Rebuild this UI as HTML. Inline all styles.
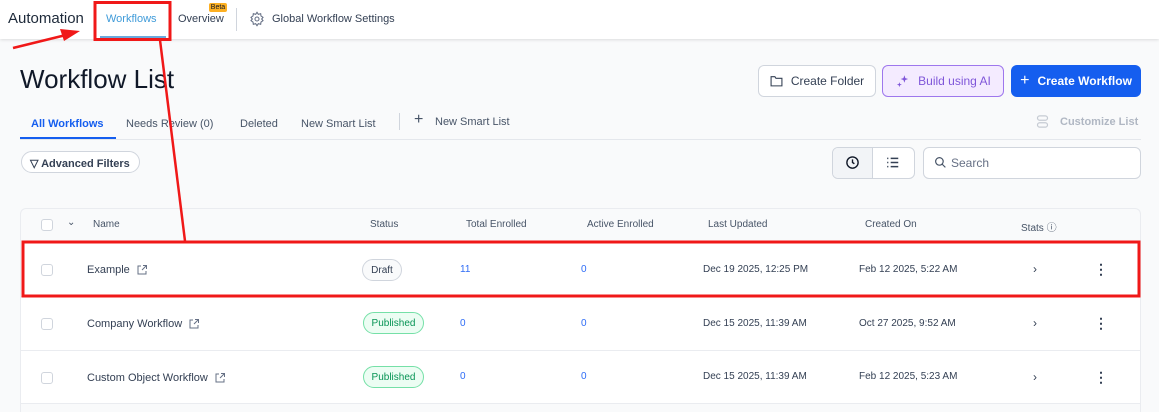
<!DOCTYPE html>
<html><head><style>
*{box-sizing:border-box;margin:0;padding:0}
html,body{width:1159px;height:412px;overflow:hidden}
body{background:#f9fafb;font-family:"Liberation Sans",sans-serif;position:relative;color:#101828}
.a{position:absolute;white-space:nowrap}
.top{position:absolute;left:0;top:0;width:1159px;height:39px;background:#fff;box-shadow:0 1px 3px rgba(0,0,0,.12)}
.btn{position:absolute;height:32px;border-radius:6px;font-size:12px;display:flex;align-items:center;justify-content:center;gap:8px}
.cb{position:absolute;width:12px;height:12px;border:1px solid #d0d5dd;border-radius:3px;background:#fff}
.h{font-size:10px;color:#475467}
.row{position:absolute;left:21px;width:1119px;background:#fff;border-bottom:1px solid #eaecf0}
.pill{position:absolute;height:22px;border-radius:11px;font-size:10px;display:flex;align-items:center;justify-content:center}
.pub{border:1px solid #75e0a7;background:#ecfdf3;color:#079455;width:61px}
.n{font-size:10px;color:#2e6cf6}
.d{font-size:10px;color:#344054}
.nm{font-size:11px;color:#344054;display:flex;align-items:center;gap:6px}
</style></head><body>
<div class="top"></div>
<div class="a" style="left:8px;top:10px;font-size:15px;color:#1d2939">Automation</div>
<div class="a" style="left:106px;top:13px;font-size:11px;color:#3f9bd9">Workflows</div>
<div class="a" style="left:100px;top:36px;width:66px;height:2px;background:#6aa9dd"></div>
<div class="a" style="left:178px;top:13px;font-size:11px;color:#344054">Overview</div>
<div class="a" style="left:209px;top:3px;width:18px;height:9px;background:#fdb022;border-radius:2px;font-size:7px;text-align:center;line-height:9px">Beta</div>
<div class="a" style="left:236px;top:8px;width:1px;height:23px;background:#d0d5dd"></div>
<svg class="a" style="left:249px;top:11px" width="16" height="16" viewBox="0 0 24 24" fill="none" stroke="#667085" stroke-width="1.6"><circle cx="12" cy="12" r="3"/><path d="M12 2l2 3 3.5-1 .5 3.5 3 2-2 2.5 2 2.5-3 2-.5 3.5-3.5-1-2 3-2-3-3.5 1-.5-3.5-3-2 2-2.5-2-2.5 3-2 .5-3.5 3.5 1z"/></svg>
<div class="a" style="left:272px;top:13px;font-size:11px;color:#344054">Global Workflow Settings</div>

<div class="a" style="left:20px;top:64px;font-size:26px;color:#101828">Workflow List</div>
<div class="btn" style="left:758px;top:65px;width:118px;background:#fff;border:1px solid #d0d5dd;color:#344054"><svg width="13" height="12" viewBox="0 0 24 22" fill="none" stroke="#344054" stroke-width="2"><path d="M2 3h7l2 3h11v14H2z"/></svg>Create Folder</div>
<div class="btn" style="left:882px;top:65px;width:122px;background:#f4ebff;border:1px solid #9e77ed;color:#7f56d9"><svg width="15" height="15" viewBox="0 0 24 24" fill="#7f56d9"><path d="M15 2l1.5 4.5L21 8l-4.5 1.5L15 14l-1.5-4.5L9 8l4.5-1.5z"/><path d="M7 13l1 3 3 1-3 1-1 3-1-3-3-1 3-1z"/></svg>Build using AI</div>
<div class="btn" style="left:1011px;top:65px;width:130px;background:#155eef;color:#fff;font-weight:bold"><span style="font-size:16px;font-weight:normal">+</span>Create Workflow</div>

<div class="a" style="left:31px;top:118px;font-size:11px;color:#155eef;font-weight:bold">All Workflows</div>
<div class="a" style="left:20px;top:137px;width:96px;height:2px;background:#155eef"></div>
<div class="a" style="left:126px;top:118px;font-size:11px;color:#475467">Needs Review (0)</div>
<div class="a" style="left:240px;top:118px;font-size:11px;color:#475467">Deleted</div>
<div class="a" style="left:301px;top:118px;font-size:11px;color:#475467">New Smart List</div>
<div class="a" style="left:399px;top:113px;width:1px;height:17px;background:#d0d5dd"></div>
<div class="a" style="left:414px;top:111px;font-size:16px;color:#475467">+</div>
<div class="a" style="left:435px;top:116px;font-size:11px;color:#475467">New Smart List</div>
<svg class="a" style="left:1035px;top:114px" width="15" height="15" viewBox="0 0 24 24" fill="none" stroke="#c6cbd3" stroke-width="2"><rect x="4" y="3" width="16" height="7" rx="3.5"/><rect x="4" y="14" width="16" height="7" rx="3.5"/></svg>
<div class="a" style="left:1060px;top:116px;font-size:11px;color:#b0b7c3;font-weight:bold">Customize List</div>
<div class="a" style="left:20px;top:139px;width:1121px;height:1px;background:#e4e7ec"></div>

<div class="a" style="left:21px;top:151px;width:119px;height:22px;border:1px solid #d0d5dd;border-radius:11px;background:#fff;font-size:11px;font-weight:bold;color:#344054;padding:5px 0 0 8px">▽ Advanced Filters</div>
<div class="a" style="left:832px;top:147px;width:83px;height:32px;border:1px solid #d0d5dd;border-radius:6px;background:#fff"></div>
<div class="a" style="left:833px;top:148px;width:40px;height:30px;background:#f2f4f7;border-right:1px solid #d0d5dd;border-radius:5px 0 0 5px"></div>
<svg class="a" style="left:845px;top:155px" width="15" height="15" viewBox="0 0 24 24" fill="none" stroke="#101828" stroke-width="2.2"><circle cx="12" cy="12" r="9"/><path d="M12 7v5l3 2"/></svg>
<svg class="a" style="left:886px;top:156px" width="14" height="13" viewBox="0 0 24 22" fill="none" stroke="#344054" stroke-width="2.6"><path d="M2 4h2M8 4h13M2 11h2M8 11h13M2 18h2M8 18h13"/></svg>
<div class="a" style="left:923px;top:147px;width:218px;height:32px;border:1px solid #d0d5dd;border-radius:6px;background:#fff"></div>
<svg class="a" style="left:934px;top:156px" width="13" height="13" viewBox="0 0 24 24" fill="none" stroke="#475467" stroke-width="2.2"><circle cx="10" cy="10" r="7"/><path d="M15 15l6 6"/></svg>
<div class="a" style="left:951px;top:156px;font-size:12px;color:#667085">Search</div>

<div class="a" style="left:20px;top:208px;width:1121px;height:204px;border:1px solid #eaecf0;border-bottom:0;border-radius:6px 6px 0 0;background:#f9fafb"></div>
<div class="cb" style="left:41px;top:219px"></div>
<div class="a h" style="left:67px;top:217px">⌄</div>
<div class="a h" style="left:93px;top:219px">Name</div>
<div class="a h" style="left:370px;top:219px">Status</div>
<div class="a h" style="left:466px;top:219px">Total Enrolled</div>
<div class="a h" style="left:587px;top:219px">Active Enrolled</div>
<div class="a h" style="left:708px;top:219px">Last Updated</div>
<div class="a h" style="left:865px;top:219px">Created On</div>
<div class="a h" style="left:1021px;top:219px">Stats ⓘ</div>

<div class="row" style="top:241px;height:56px"></div>
<div class="row" style="top:297px;height:54px"></div>
<div class="row" style="top:351px;height:53px"></div>

<div class="cb" style="left:41px;top:264px"></div>
<div class="a nm" style="left:87px;top:264px">Example <svg width="12" height="12" viewBox="0 0 24 24" fill="none" stroke="#667085" stroke-width="2"><path d="M10 4H4v16h16v-6M14 3h7v7M21 3l-9 9"/></svg></div>
<div class="pill" style="left:362px;top:259px;width:40px;border:1px solid #d0d5dd;background:#f9fafb;color:#344054">Draft</div>
<div class="a n" style="left:460px;top:264px">11</div>
<div class="a n" style="left:581px;top:264px">0</div>
<div class="a d" style="left:703px;top:264px">Dec 19 2025, 12:25 PM</div>
<div class="a d" style="left:859px;top:264px">Feb 12 2025, 5:22 AM</div>
<div class="a" style="left:1033px;top:262px;font-size:12px;color:#344054">›</div>
<div class="a" style="left:1094px;top:261px;font-size:14px;font-weight:bold;color:#344054">⋮</div>

<div class="cb" style="left:41px;top:318px"></div>
<div class="a nm" style="left:87px;top:318px">Company Workflow <svg width="12" height="12" viewBox="0 0 24 24" fill="none" stroke="#667085" stroke-width="2"><path d="M10 4H4v16h16v-6M14 3h7v7M21 3l-9 9"/></svg></div>
<div class="pill pub" style="left:363px;top:312px">Published</div>
<div class="a n" style="left:460px;top:318px">0</div>
<div class="a n" style="left:581px;top:318px">0</div>
<div class="a d" style="left:703px;top:318px">Dec 15 2025, 11:39 AM</div>
<div class="a d" style="left:859px;top:318px">Oct 27 2025, 9:52 AM</div>
<div class="a" style="left:1033px;top:316px;font-size:12px;color:#344054">›</div>
<div class="a" style="left:1094px;top:315px;font-size:14px;font-weight:bold;color:#344054">⋮</div>

<div class="cb" style="left:41px;top:372px"></div>
<div class="a nm" style="left:87px;top:372px">Custom Object Workflow <svg width="12" height="12" viewBox="0 0 24 24" fill="none" stroke="#667085" stroke-width="2"><path d="M10 4H4v16h16v-6M14 3h7v7M21 3l-9 9"/></svg></div>
<div class="pill pub" style="left:363px;top:366px">Published</div>
<div class="a n" style="left:460px;top:371px">0</div>
<div class="a n" style="left:581px;top:371px">0</div>
<div class="a d" style="left:703px;top:371px">Dec 15 2025, 11:39 AM</div>
<div class="a d" style="left:859px;top:371px">Feb 12 2025, 5:23 AM</div>
<div class="a" style="left:1033px;top:370px;font-size:12px;color:#344054">›</div>
<div class="a" style="left:1094px;top:369px;font-size:14px;font-weight:bold;color:#344054">⋮</div>

<svg class="a" style="left:0;top:0" width="1159" height="412">
<g stroke="#f01818" fill="none" stroke-width="3">
<rect x="95" y="2.5" width="75" height="37"/>
<rect x="23" y="242" width="1116" height="54"/>
</g>
<line x1="160" y1="40" x2="185" y2="241" stroke="#f01818" stroke-width="2.5"/>
<line x1="13" y1="48" x2="66" y2="35" stroke="#f01818" stroke-width="2.5"/>
<polygon points="80,31 60,29 64,41" fill="#f01818"/>
</svg>
</body></html>
